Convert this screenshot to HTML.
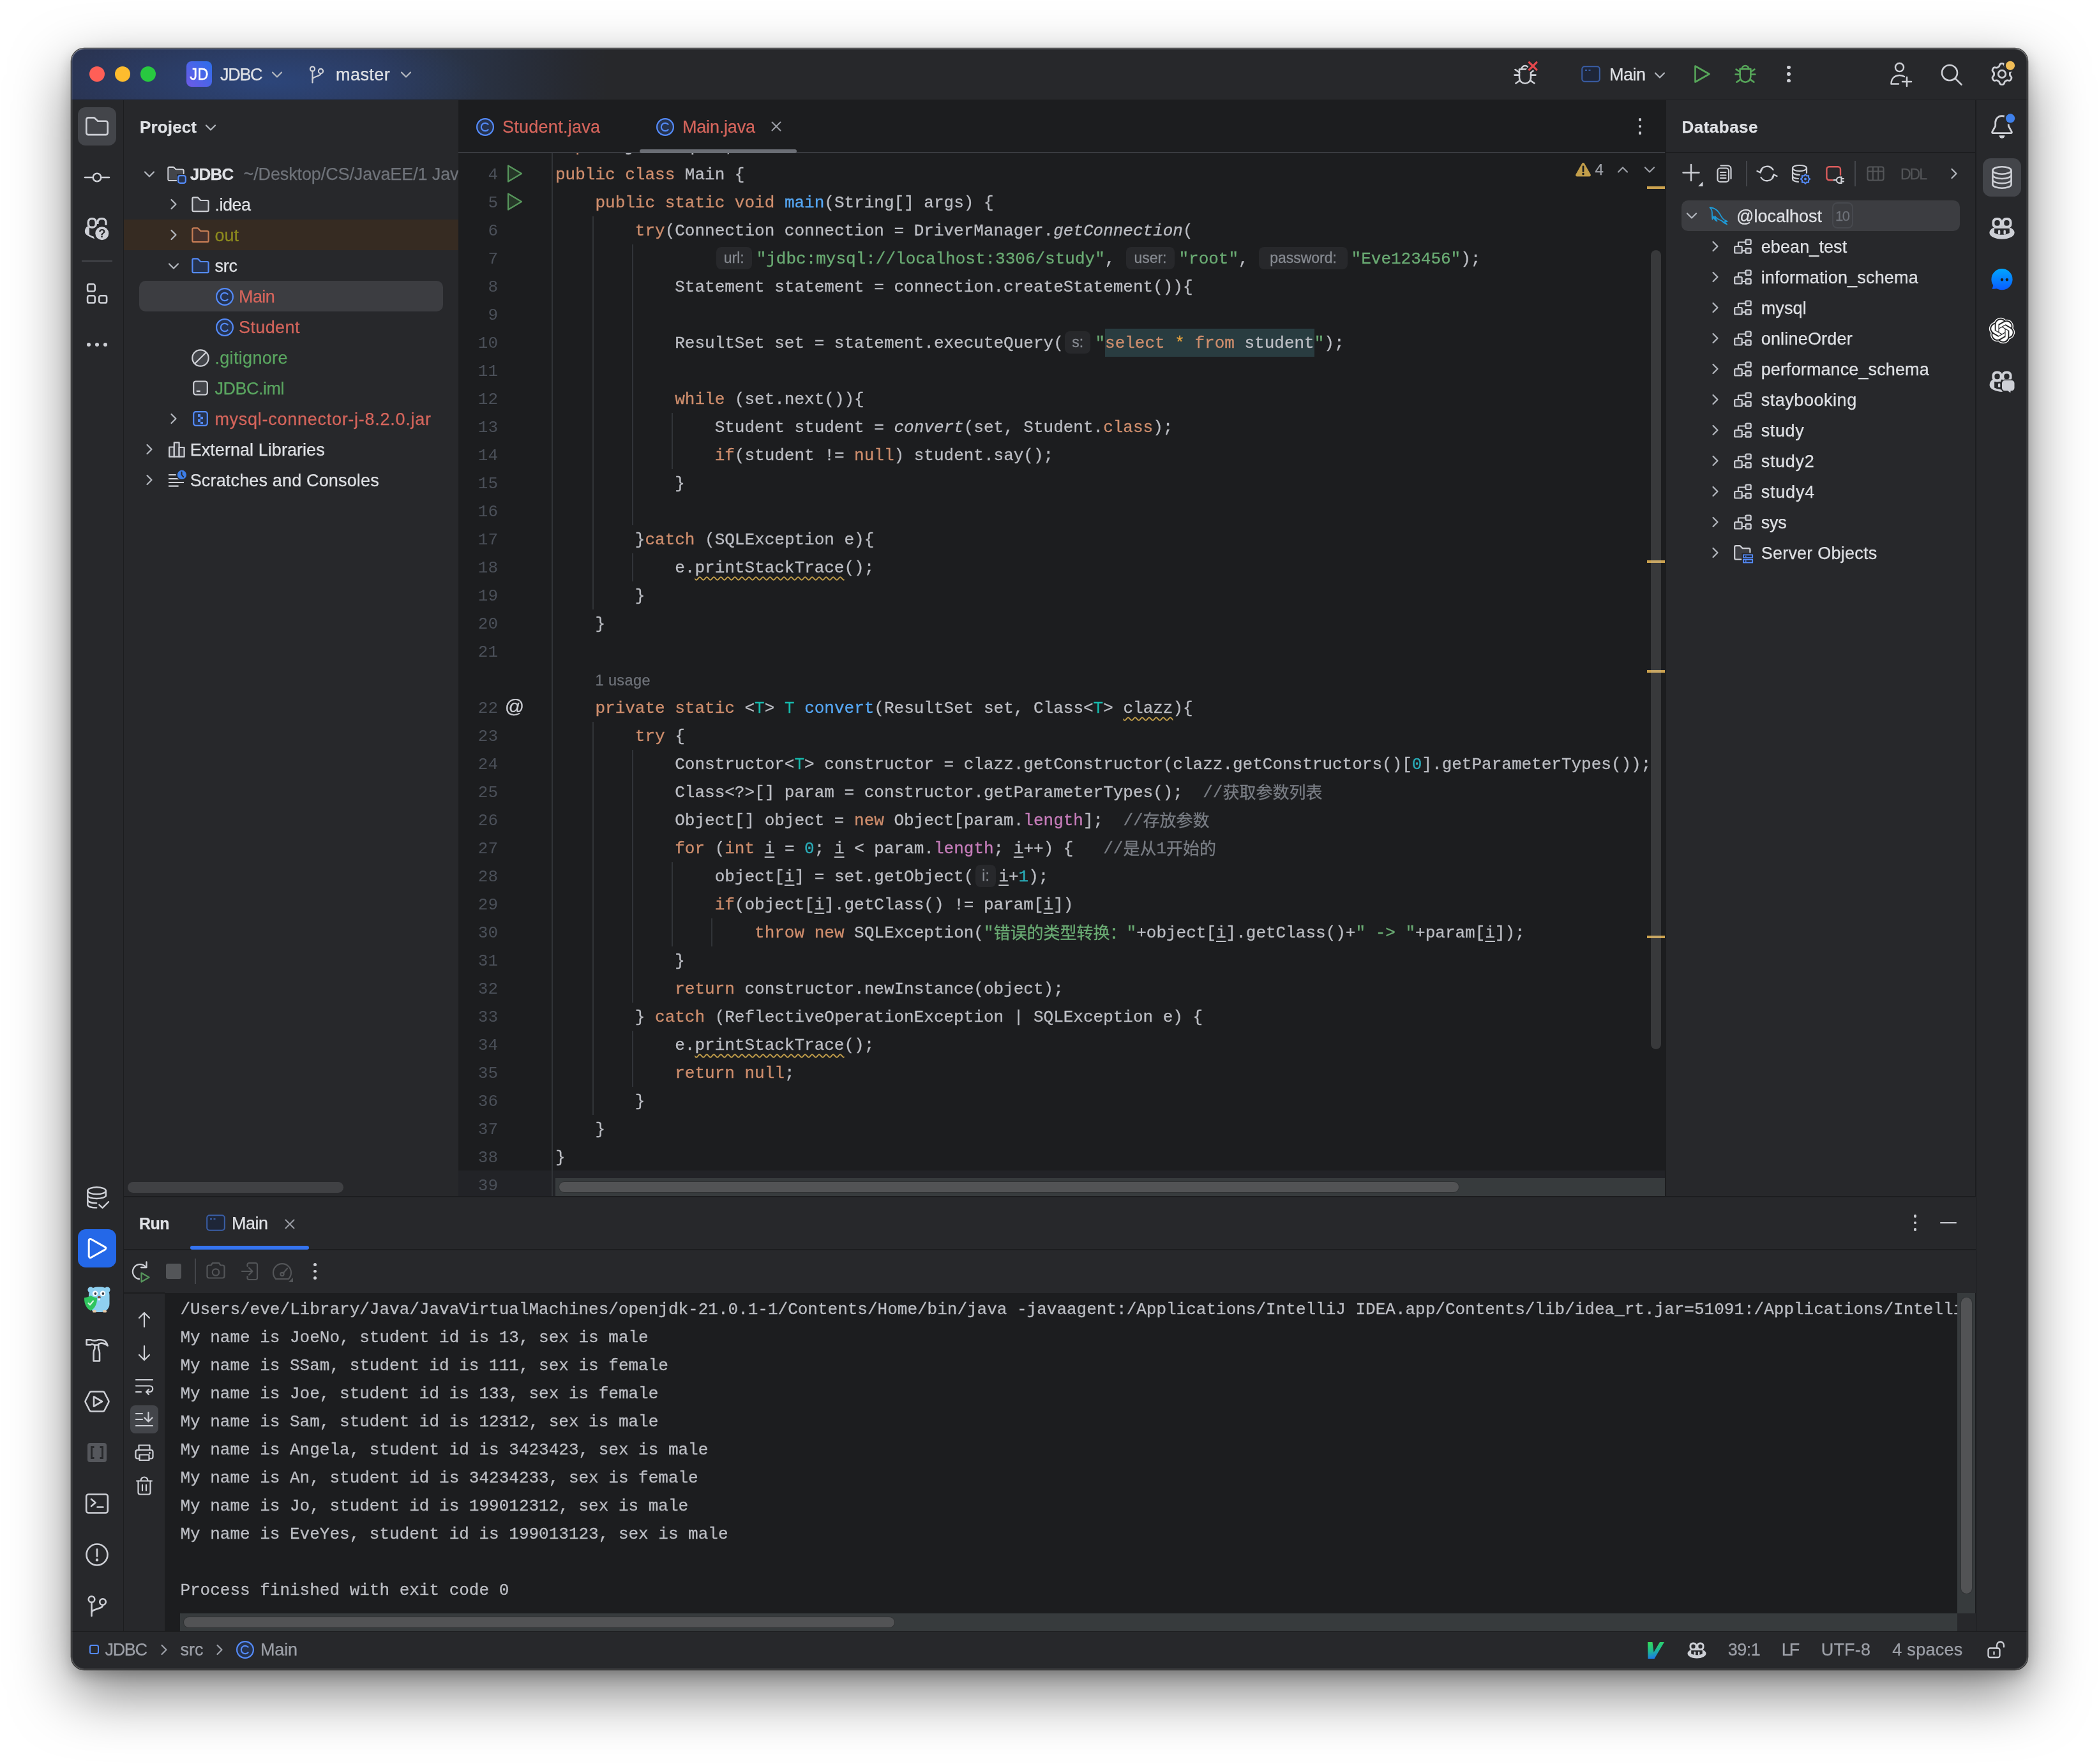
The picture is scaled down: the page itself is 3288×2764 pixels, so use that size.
<!DOCTYPE html>
<html lang="en"><head><meta charset="utf-8"><title>JDBC – Main.java</title>
<style>
html,body{margin:0;padding:0;}
body{width:3288px;height:2764px;background:#fff;position:relative;overflow:hidden;font-family:"Liberation Sans","Noto Sans CJK SC",sans-serif;}
.a{position:absolute;box-sizing:border-box;}
.t{white-space:pre;-webkit-text-stroke:.25px currentColor;}
.m{font-family:"Liberation Mono","Noto Sans CJK SC",monospace;}
#clip{left:0;top:0;width:3288px;height:2764px;clip-path:inset(76px 112px 148px 112px round 20px);will-change:transform;}
#win{left:112px;top:76px;width:3064px;height:2540px;border-radius:20px;background:#27282b;overflow:hidden;}
#shadow{left:112px;top:76px;width:3064px;height:2540px;border-radius:20px;box-shadow:0 0 0 1.3px rgba(0,0,0,.72),0 8px 22px rgba(0,0,0,.22),0 36px 92px rgba(0,0,0,.5);}
#ring{left:112px;top:76px;width:3064px;height:2540px;border-radius:20px;box-shadow:inset 0 0 0 1.5px rgba(255,255,255,.17);pointer-events:none;}
.code{left:870px;-webkit-text-stroke:.3px currentColor;margin-top:1px;font-size:26px;line-height:44px;height:44px;color:#bcbec4;white-space:pre;font-family:"Liberation Mono","Noto Sans CJK SC",monospace;}
.k{color:#cf8e6d}.f{color:#56a8f5}.s{color:#6aab73}.n{color:#2aacb8}.tp{color:#16baac}.fd{color:#c77dbb}.c{color:#7a7e85}.i{font-style:italic}
.u{text-decoration:underline;text-decoration-thickness:1.6px;text-underline-offset:4.5px}
.cj{position:relative;top:2px}
.w{text-decoration:underline wavy #c29e4a;text-decoration-thickness:1.5px;text-underline-offset:6px;text-decoration-skip-ink:none}
.h{display:inline-block;position:relative;height:44px;vertical-align:top}
.h b{position:absolute;top:2.5px;height:35px;border-radius:8px;background:#27282b;color:#868a91;font-weight:normal;font-family:"Liberation Sans",sans-serif;font-size:23px;line-height:35px;text-align:center;}
.ln{margin-top:1px;font-size:26px;line-height:44px;height:44px;color:#4b5059;text-align:right;width:80px;left:700px;font-family:"Liberation Mono",monospace;}
.con{-webkit-text-stroke:.3px currentColor;left:282px;font-size:26px;line-height:44px;height:44px;color:#bcbec4;white-space:pre;font-family:"Liberation Mono",monospace;}

</style></head>
<body>
<div class="a" id="shadow"></div>
<div class="a" id="clip">
<div class="a" id="win"></div>
<div class="a" style="left:112px;top:76px;width:3064px;height:80px;background:radial-gradient(ellipse 340px 85px at 310px 52px,rgba(48,92,178,.40),rgba(48,92,178,.18) 55%,rgba(48,92,178,0) 100%),linear-gradient(90deg,#2a3452 0px,#2a3654 330px,#2b3653 480px,#2a3448 588px,#282e3b 700px,#272a32 770px,#27282b 840px);border-radius:20px 20px 0 0;box-shadow:inset 0 1px 0 rgba(255,255,255,.18);"></div>
<div class="a" style="left:112px;top:156px;width:3064px;height:1px;background:#1c1d1f;"></div>
<div class="a" style="left:140px;top:104px;width:24px;height:24px;background:#ff5f57;border-radius:12px;"></div>
<div class="a" style="left:180px;top:104px;width:24px;height:24px;background:#febc2e;border-radius:12px;"></div>
<div class="a" style="left:220px;top:104px;width:24px;height:24px;background:#28c840;border-radius:12px;"></div>
<div class="a" style="left:292px;top:96px;width:40px;height:40px;background:linear-gradient(45deg,#6e5ae6 0%,#4f63e8 45%,#2b6fea 100%);border-radius:8px;"></div>
<div class="a t" style="left:292px;top:96px;width:40px;line-height:40px;text-align:center;font-size:26px;color:#fff;transform:scaleX(.9);-webkit-text-stroke:.5px #fff;letter-spacing:.5px;">JD</div>
<div class="a t " style="left:345px;top:97px;line-height:40px;font-size:27px;color:#dfe1e5;letter-spacing:-1.303px;">JDBC</div>
<svg class="a" style="left:424px;top:111px;" width="20" height="12" viewBox="-10 -6 20 12" fill="none"><path d="M-7 -3.5L0 3.5L7 -3.5" stroke="#b4b8bf" stroke-width="2.2" stroke-linecap="round" stroke-linejoin="round"/></svg>
<svg class="a" style="left:482px;top:99px;" width="28" height="36" viewBox="-14 -18 28 36" fill="none"><g stroke="#ced0d6" stroke-width="2.2" stroke-linecap="round"><circle cx="-6.5" cy="-9" r="3.6"/><circle cx="6.5" cy="-5.5" r="3.6"/><path d="M-6.5 -5.4V12.5"/><path d="M6.5 -1.9C6.5 3.5 -6.5 2 -6.5 7.5"/></g></svg>
<div class="a t " style="left:526px;top:97px;line-height:40px;font-size:27px;color:#dfe1e5;letter-spacing:0.437px;">master</div>
<svg class="a" style="left:626px;top:111px;" width="20" height="12" viewBox="-10 -6 20 12" fill="none"><path d="M-7 -3.5L0 3.5L7 -3.5" stroke="#b4b8bf" stroke-width="2.2" stroke-linecap="round" stroke-linejoin="round"/></svg>
<svg class="a" style="left:2362.5px;top:91px;" width="52" height="52" viewBox="-26 -26 52 52" fill="none"><g stroke="#ced0d6" stroke-width="2.6" stroke-linecap="round" stroke-linejoin="round" fill="none"><path d="M-9 -8.5H9V4.7a9 9 0 0 1 -18 0Z"/><path d="M-5.5 -8.5a5.5 5.5 0 0 1 11 0"/><path d="M-9 0.6H-16.5M9 0.6H16.5M-9 -3.5L-15.5 -8M9 -3.5L15.5 -8M-8 9L-14.5 13.5M8 9L14.5 13.5"/></g><path d="M6 -19.7L18.4 -7.3M18.4 -19.7L6 -7.3" stroke="#27282b" stroke-width="8" stroke-linecap="round"/><path d="M6.5 -19.2L17.9 -7.8M17.9 -19.2L6.5 -7.8" stroke="#e5484d" stroke-width="3.2" stroke-linecap="round"/></svg>
<svg class="a" style="left:2477px;top:103px;" width="30" height="26" viewBox="-15 -13 30 26" fill="none"><rect x="-13.8" y="-11.8" width="27.6" height="23.6" rx="4" fill="#1e2638" stroke="#3a5ea6" stroke-width="2"/><path d="M-9 -6H-6M-3.5 -6H-0.5" stroke="#3a5ea6" stroke-width="1.8"/></svg>
<div class="a t " style="left:2521px;top:97px;line-height:40px;font-size:27px;color:#dfe1e5;letter-spacing:-0.508px;">Main</div>
<svg class="a" style="left:2590px;top:112px;" width="20" height="12" viewBox="-10 -6 20 12" fill="none"><path d="M-7 -3.5L0 3.5L7 -3.5" stroke="#b4b8bf" stroke-width="2.2" stroke-linecap="round" stroke-linejoin="round"/></svg>
<svg class="a" style="left:2651px;top:100px;" width="30" height="32" viewBox="-15 -16 30 32" fill="none"><path d="M-10.5 -12.5L11.5 0L-10.5 12.5Z" stroke="#57a65a" stroke-width="2.6" stroke-linejoin="round"/></svg>
<svg class="a" style="left:2714px;top:96px;" width="40" height="40" viewBox="-20 -20 40 40" fill="none"><g transform="scale(.93)" stroke="#57a65a" stroke-width="2.8" stroke-linecap="round" stroke-linejoin="round" fill="none"><path d="M-9 -8.5H9V4.7a9 9 0 0 1 -18 0Z"/><path d="M-5.5 -8.5a5.5 5.5 0 0 1 11 0"/><path d="M-9 0.6H-16.5M9 0.6H16.5M-9 -3.5L-15.5 -8M9 -3.5L15.5 -8M-8 9L-14.5 13.5M8 9L14.5 13.5"/></g></svg>
<div class="a" style="left:2799.4px;top:102.9px;width:5.2px;height:5.2px;background:#ced0d6;border-radius:3px;"></div>
<div class="a" style="left:2799.4px;top:113.4px;width:5.2px;height:5.2px;background:#ced0d6;border-radius:3px;"></div>
<div class="a" style="left:2799.4px;top:123.9px;width:5.2px;height:5.2px;background:#ced0d6;border-radius:3px;"></div>
<svg class="a" style="left:2958px;top:97px;" width="40" height="40" viewBox="-20 -20 40 40" fill="none"><g stroke="#ced0d6" stroke-width="2.5" stroke-linecap="round" fill="none"><circle cx="-2.5" cy="-11.5" r="6.5"/><path d="M-15.5 14.5H-4M-15.5 14.5 C-15.5 5 -9 1 -2.5 1 C0.5 1 3 1.8 5 3"/><path d="M9 4V18M2 11H16"/></g></svg>
<svg class="a" style="left:3037.5px;top:98px;" width="38" height="38" viewBox="-19 -19 38 38" fill="none"><g stroke="#ced0d6" stroke-width="2.6" stroke-linecap="round" fill="none"><circle cx="-3" cy="-3" r="12"/><path d="M5.8 5.8L15.5 15.5"/></g></svg>
<svg class="a" style="left:3112px;top:92.2px;" width="48" height="48" viewBox="-24 -24 48 48" fill="none"><g stroke="#ced0d6" stroke-width="2.8" stroke-linejoin="round" fill="none"><path d="M12.40 0.00L12.40 0.65L12.44 1.31L12.59 1.99L13.04 2.77L13.91 3.73L14.71 4.78L14.99 5.75L14.89 6.63L14.59 7.44L14.20 8.20L13.74 8.92L13.18 9.58L12.48 10.11L11.49 10.35L10.18 10.18L8.92 9.91L8.02 9.90L7.35 10.12L6.76 10.42L6.20 10.74L5.64 11.07L5.09 11.42L4.57 11.90L4.12 12.68L3.73 13.91L3.22 15.13L2.51 15.86L1.70 16.21L0.86 16.36L0.00 16.40L-0.86 16.36L-1.70 16.21L-2.51 15.86L-3.22 15.13L-3.73 13.91L-4.12 12.68L-4.57 11.90L-5.09 11.42L-5.64 11.07L-6.20 10.74L-6.76 10.42L-7.35 10.12L-8.02 9.90L-8.92 9.91L-10.18 10.18L-11.49 10.35L-12.48 10.11L-13.18 9.58L-13.74 8.92L-14.20 8.20L-14.59 7.44L-14.89 6.63L-14.99 5.75L-14.71 4.78L-13.91 3.73L-13.04 2.77L-12.59 1.99L-12.44 1.31L-12.40 0.65L-12.40 0.00L-12.40 -0.65L-12.44 -1.31L-12.59 -1.99L-13.04 -2.77L-13.91 -3.73L-14.71 -4.78L-14.99 -5.75L-14.89 -6.63L-14.59 -7.44L-14.20 -8.20L-13.74 -8.92L-13.18 -9.58L-12.48 -10.11L-11.49 -10.35L-10.18 -10.18L-8.92 -9.91L-8.02 -9.90L-7.35 -10.12L-6.76 -10.42L-6.20 -10.74L-5.64 -11.07L-5.09 -11.42L-4.57 -11.90L-4.12 -12.68L-3.73 -13.91L-3.22 -15.13L-2.51 -15.86L-1.70 -16.21L-0.86 -16.36L-0.00 -16.40L0.86 -16.36L1.70 -16.21L2.51 -15.86L3.22 -15.13L3.73 -13.91L4.12 -12.68L4.57 -11.90L5.09 -11.42L5.64 -11.07L6.20 -10.74L6.76 -10.42L7.35 -10.12L8.02 -9.90L8.92 -9.91L10.18 -10.18L11.49 -10.35L12.48 -10.11L13.18 -9.58L13.74 -8.92L14.20 -8.20L14.59 -7.44L14.89 -6.63L14.99 -5.75L14.71 -4.78L13.91 -3.73L13.04 -2.77L12.59 -1.99L12.44 -1.31L12.40 -0.65Z"/><circle r="5.8"/></g><circle cx="13" cy="-13.2" r="10" fill="#27282b"/><circle cx="13" cy="-13.2" r="7.1" fill="#f0bd57"/></svg>
<div class="a" style="left:112px;top:157px;width:81px;height:2400px;background:#27282b;"></div>
<div class="a" style="left:193px;top:157px;width:1px;height:2400px;background:#1c1d1f;"></div>
<div class="a" style="left:122px;top:168px;width:60px;height:60px;background:#43454a;border-radius:12px;"></div>
<svg class="a" style="left:130px;top:178px;" width="44" height="40" viewBox="-22 -20 44 40" fill="none"><path d="M-16.7 -10.6 a3 3 0 0 1 3 -3 h8.2 a3 3 0 0 1 2.1 .9 l4.6 4.4 h12.5 a3 3 0 0 1 3 3 v15.4 a3 3 0 0 1 -3 3 h-27.4 a3 3 0 0 1 -3 -3 z" stroke="#ced0d6" stroke-width="2.6" stroke-linejoin="round"/></svg>
<svg class="a" style="left:130px;top:268px;" width="44" height="20" viewBox="-22 -10 44 20" fill="none"><g stroke="#ced0d6" stroke-width="2.6" stroke-linecap="round"><path d="M-19 0H-8M8 0H19"/><circle r="6.3"/></g></svg>
<svg class="a" style="left:130px;top:337px;" width="44" height="44" viewBox="-22 -22 44 44" fill="none"><g stroke="#ced0d6" stroke-width="3.4" fill="none"><rect x="-13.7" y="-16.4" width="12" height="13.6" rx="5.3"/><path d="M0.9 -8V-10.9a5.5 5.5 0 0 1 5.5 -5.5h2a5.5 5.5 0 0 1 5.5 5.5V-6.3"/></g><path d="M-15.4 -4.5C-18.5 -1.5 -19.3 1.5 -19.1 4C-19 7 -17.5 8.5 -15 10C-11.5 12.2 -7.5 14 -3.8 15.2L-5.5 11.5C-8 10.8 -10.2 9.8 -12 8.4V-2.5Z" fill="#ced0d6"/><circle cx="7.8" cy="6.7" r="12.3" fill="#27282b"/><circle cx="7.8" cy="6.7" r="10.5" fill="#ced0d6"/><text x="7.9" y="13.4" text-anchor="middle" font-family="Liberation Sans,sans-serif" font-weight="bold" font-size="18.5" fill="#27282b">?</text></svg>
<div class="a" style="left:128px;top:408px;width:48px;height:2px;background:#43454a;"></div>
<svg class="a" style="left:132px;top:441px;" width="40" height="40" viewBox="-20 -20 40 40" fill="none"><g stroke="#ced0d6" stroke-width="2.6"><rect x="-14.9" y="-15.7" width="11.6" height="11.2" rx="2.6"/><rect x="-14.9" y="2.3" width="11.6" height="11.2" rx="2.6"/><rect x="3.3" y="2.3" width="11.8" height="11.2" rx="2.6"/></g></svg>
<div class="a" style="left:135.8px;top:537px;width:6px;height:6px;background:#ced0d6;border-radius:3px;"></div>
<div class="a" style="left:149px;top:537px;width:6px;height:6px;background:#ced0d6;border-radius:3px;"></div>
<div class="a" style="left:162.2px;top:537px;width:6px;height:6px;background:#ced0d6;border-radius:3px;"></div>
<svg class="a" style="left:130px;top:1855px;" width="44" height="44" viewBox="-22 -22 44 44" fill="none"><g stroke="#ced0d6" stroke-width="2.4" stroke-linecap="round" stroke-linejoin="round" fill="none"><ellipse cx="-0.4" cy="-11.3" rx="14.3" ry="5.4"/><path d="M-14.7 -11.3V10.5C-14.7 13.5 -8.5 15.3 -0.8 15.4"/><path d="M13.9 -11.3V-3.5"/><path d="M-14.7 -4C-14.7 -1 -8 1 -0.4 1C7 1 13.9 -1 13.9 -4"/><path d="M-14.7 3.2C-14.7 6.2 -8.5 8 -0.8 8.1"/><path d="M3.4 10.8L8.5 15.6L18 6.2"/></g></svg>
<div class="a" style="left:122px;top:1926px;width:60px;height:60px;background:#2468e8;border-radius:12.5px;"></div>
<svg class="a" style="left:130px;top:1934px;" width="44" height="44" viewBox="-22 -22 44 44" fill="none"><path d="M-10.3 -12.1L11.1 0L-10.3 12.1Z" stroke="#ffffff" stroke-width="8" stroke-linejoin="round" fill="#fff"/><path d="M-10.3 -12.1L11.1 0L-10.3 12.1Z" stroke="#2468e8" stroke-width="2" stroke-linejoin="round" fill="#2468e8"/></svg>
<svg class="a" style="left:130px;top:2014px;" width="44" height="44" viewBox="-22 -22 44 44" fill="none"><circle cx="-10" cy="-15" r="4.6" fill="#8fd0f0"/><circle cx="16" cy="-15" r="4.6" fill="#8fd0f0"/><rect x="-13" y="-19.5" width="32.5" height="39.5" rx="13" fill="#8fd0f0"/><rect x="-7" y="17" width="6" height="3.5" rx="1.5" fill="#e6c9a8"/><rect x="9" y="17" width="6" height="3.5" rx="1.5" fill="#e6c9a8"/><circle cx="-3" cy="-9.2" r="4.2" fill="#fff"/><circle cx="9" cy="-9.2" r="4.2" fill="#fff"/><circle cx="-2.6" cy="-9" r="1.9" fill="#3a3f4a"/><circle cx="9.4" cy="-9" r="1.9" fill="#3a3f4a"/><ellipse cx="3.3" cy="-3.3" rx="2.6" ry="1.9" fill="#7a4a3a"/><rect x="1.6" y="-1.6" width="3.4" height="3" rx="1" fill="#fff"/><path d="M-20 -2.5 C-16 -3 -13 -4.2 -10 -6 C-7 -4.2 -4 -3 0 -2.5 C0.3 8 -4 14.5 -10 17.8 C-16 14.5 -20.3 8 -20 -2.5Z" fill="#2fc55e"/><path d="M-13.5 6 L-11 8.5 L-6 2.5" stroke="#d8f5e0" stroke-width="2.2" fill="none" stroke-linecap="round" stroke-linejoin="round"/></svg>
<svg class="a" style="left:130px;top:2094px;" width="44" height="44" viewBox="-22 -22 44 44" fill="none"><g stroke="#ced0d6" stroke-width="2.6" stroke-linejoin="round" stroke-linecap="round" fill="none"><path d="M-16.4 -16.7 L-9.5 -16.7 C-6 -15 -2 -15 1.5 -16.7 L6 -16.7 C11.5 -16.7 15 -13 16.6 -7.5 C13 -10.5 9 -11.6 5.5 -11.3 C3.5 -11 2 -9.8 1 -8.5 L-4.5 -8.5 C-6.5 -10 -8.5 -10 -10 -8.8 L-16.4 -8.8 Z"/><path d="M-3.6 -8 L-3.6 -2.5 C-5.4 0 -5.4 2 -5.4 4 L-5.4 16.5 L4 16.5 L4 4 C4 2 4 0 2.2 -2.5 L2.2 -8"/></g></svg>
<svg class="a" style="left:130px;top:2176px;" width="44" height="40" viewBox="-22 -20 44 40" fill="none"><g stroke="#ced0d6" stroke-width="2.6" stroke-linejoin="round" fill="none"><path d="M-9 -15.5 H9 a3 3 0 0 1 2.6 1.5 L18 -1.5 a3 3 0 0 1 0 3 L11.6 14 a3 3 0 0 1 -2.6 1.5 H-9 a3 3 0 0 1 -2.6 -1.5 L-18 1.5 a3 3 0 0 1 0 -3 L-11.6 -14 a3 3 0 0 1 2.6 -1.5 Z"/><path d="M-5 -7.5 L8 0 L-5 7.5 Z"/></g></svg>
<svg class="a" style="left:135px;top:2259px;" width="34" height="34" viewBox="-17 -17 34 34" fill="none"><rect x="-15" y="-15" width="30" height="30" rx="4" fill="#55575c"/><path d="M-4.5 -8.5H-8.5V8.5H-4.5M4.5 -8.5H8.5V8.5H4.5" stroke="#27282b" stroke-width="3" fill="none"/></svg>
<svg class="a" style="left:132px;top:2338px;" width="40" height="36" viewBox="-20 -18 40 36" fill="none"><g stroke="#ced0d6" stroke-width="2.6" stroke-linecap="round" stroke-linejoin="round" fill="none"><rect x="-16.8" y="-14.5" width="33.6" height="29" rx="3.5"/><path d="M-9 -7 L-2.5 -1.5 L-9 4M0.5 5.5 H9.5"/></g></svg>
<svg class="a" style="left:132px;top:2416px;" width="40" height="40" viewBox="-20 -20 40 40" fill="none"><g stroke="#ced0d6" stroke-width="2.6" stroke-linecap="round" fill="none"><circle r="16.5"/><path d="M0 -8.5V2.5"/></g><circle cy="8.3" r="2.2" fill="#ced0d6"/></svg>
<svg class="a" style="left:134px;top:2496px;" width="36" height="40" viewBox="-18 -20 36 40" fill="none"><g stroke="#ced0d6" stroke-width="2.6" stroke-linecap="round" fill="none"><circle cx="-8.5" cy="-10" r="4.8"/><circle cx="9" cy="-6" r="4.8"/><path d="M-8.5 -5V16"/><path d="M9 -1 C9 6 -8.5 4 -8.5 11"/></g></svg>
<div class="a" style="left:194px;top:157px;width:524px;height:1717px;background:#27282b;"></div>
<div class="a t " style="left:219px;top:174.5px;line-height:48px;font-size:26px;color:#dfe1e5;letter-spacing:0.142px;font-weight:bold;">Project</div>
<svg class="a" style="left:320px;top:194px;" width="20" height="12" viewBox="-10 -6 20 12" fill="none"><path d="M-7 -3.5L0 3.5L7 -3.5" stroke="#b4b8bf" stroke-width="2.2" stroke-linecap="round" stroke-linejoin="round"/></svg>
<div class="a" style="left:194px;top:344px;width:524px;height:48px;background:#362b22;"></div>
<div class="a" style="left:218px;top:440px;width:476px;height:48px;background:#3c3d41;border-radius:10px;"></div>
<svg class="a" style="left:223.5px;top:267px;" width="20" height="12" viewBox="-10 -6 20 12" fill="none"><path d="M-7 -3.5L0 3.5L7 -3.5" stroke="#b4b8bf" stroke-width="2.2" stroke-linecap="round" stroke-linejoin="round"/></svg>
<svg class="a" style="left:259px;top:257px;" width="36" height="32" viewBox="-18 -16 36 32" fill="none"><path d="M-13.6 -9.2 a2 2 0 0 1 2 -2 h5.6 a2 2 0 0 1 1.5 .6 l3.3 3.3 h9.8 a2 2 0 0 1 2 2 v4.3 M-1 9.8 h-10.6 a2 2 0 0 1 -2 -2 v-17" fill="none" stroke="#ced0d6" stroke-width="2.2" stroke-linejoin="round" stroke-linecap="round"/><path d="M-12.5 -9 h7 l4 4 h11 v5 h-9.5 v9 h-12.5z" fill="#43454a"/><rect x="2.2" y="2.2" width="11.6" height="11.6" rx="3" fill="#25324d" stroke="#548af7" stroke-width="2.2"/></svg>
<div class="a t " style="left:297.7px;top:249px;line-height:48px;font-size:26px;color:#dfe1e5;letter-spacing:-0.731px;font-weight:bold;">JDBC</div>
<div class="a t " style="left:381.5px;top:249px;line-height:48px;font-size:27px;color:#6f737a;letter-spacing:-0.117px;width:336.5px;overflow:hidden;">~/Desktop/CS/JavaEE/1 Java</div>
<svg class="a" style="left:265.5px;top:310px;" width="12" height="20" viewBox="-6 -10 12 20" fill="none"><path d="M-3.5 -7L3.5 0L-3.5 7" stroke="#b4b8bf" stroke-width="2.2" stroke-linecap="round" stroke-linejoin="round"/></svg>
<svg class="a" style="left:298px;top:306.5px;" width="32" height="28" viewBox="-16 -14 32 28" fill="none"><path d="M-12.6 -9.6 a2 2 0 0 1 2 -2 h5.6 a2 2 0 0 1 1.5 .6 l3.8 4 h10.3 a2 2 0 0 1 2 2 v13.2 a2 2 0 0 1 -2 2 h-21.2 a2 2 0 0 1 -2 -2 z" fill="#3c3d42" stroke="#ced0d6" stroke-width="2.2" stroke-linejoin="round"/></svg>
<div class="a t " style="left:336.4px;top:297px;line-height:48px;font-size:27px;color:#dfe1e5;letter-spacing:-0.487px;">.idea</div>
<svg class="a" style="left:265.5px;top:358px;" width="12" height="20" viewBox="-6 -10 12 20" fill="none"><path d="M-3.5 -7L3.5 0L-3.5 7" stroke="#b4b8bf" stroke-width="2.2" stroke-linecap="round" stroke-linejoin="round"/></svg>
<svg class="a" style="left:298px;top:354.5px;" width="32" height="28" viewBox="-16 -14 32 28" fill="none"><path d="M-12.6 -9.6 a2 2 0 0 1 2 -2 h5.6 a2 2 0 0 1 1.5 .6 l3.8 4 h10.3 a2 2 0 0 1 2 2 v13.2 a2 2 0 0 1 -2 2 h-21.2 a2 2 0 0 1 -2 -2 z" fill="#45302b" stroke="#c77d55" stroke-width="2.2" stroke-linejoin="round"/></svg>
<div class="a t " style="left:336.4px;top:345px;line-height:48px;font-size:27px;color:#8c8a1e;letter-spacing:0.034px;">out</div>
<svg class="a" style="left:261.5px;top:411px;" width="20" height="12" viewBox="-10 -6 20 12" fill="none"><path d="M-7 -3.5L0 3.5L7 -3.5" stroke="#b4b8bf" stroke-width="2.2" stroke-linecap="round" stroke-linejoin="round"/></svg>
<svg class="a" style="left:298px;top:402.5px;" width="32" height="28" viewBox="-16 -14 32 28" fill="none"><path d="M-12.6 -9.6 a2 2 0 0 1 2 -2 h5.6 a2 2 0 0 1 1.5 .6 l3.8 4 h10.3 a2 2 0 0 1 2 2 v13.2 a2 2 0 0 1 -2 2 h-21.2 a2 2 0 0 1 -2 -2 z" fill="#25324d" stroke="#548af7" stroke-width="2.2" stroke-linejoin="round"/></svg>
<div class="a t " style="left:336.4px;top:393px;line-height:48px;font-size:27px;color:#dfe1e5;letter-spacing:-0.196px;">src</div>
<svg class="a" style="left:337.2px;top:450px;" width="30" height="30" viewBox="-15 -15 30 30" fill="none"><circle r="12.9" fill="#25324d" stroke="#548af7" stroke-width="2.2"/><path d="M4.6 -4.2 A6.2 6.2 0 1 0 4.6 4.2" stroke="#548af7" stroke-width="2.2" stroke-linecap="round" fill="none"/></svg>
<div class="a t " style="left:374px;top:441px;line-height:48px;font-size:27px;color:#d5655c;letter-spacing:-0.574px;">Main</div>
<svg class="a" style="left:337.2px;top:498px;" width="30" height="30" viewBox="-15 -15 30 30" fill="none"><circle r="12.9" fill="#25324d" stroke="#548af7" stroke-width="2.2"/><path d="M4.6 -4.2 A6.2 6.2 0 1 0 4.6 4.2" stroke="#548af7" stroke-width="2.2" stroke-linecap="round" fill="none"/></svg>
<div class="a t " style="left:374px;top:489px;line-height:48px;font-size:27px;color:#d5655c;letter-spacing:0.388px;">Student</div>
<svg class="a" style="left:298px;top:545px;" width="32" height="32" viewBox="-16 -16 32 32" fill="none"><g stroke="#ced0d6" stroke-width="2.2" stroke-linecap="round"><circle r="12.7" fill="#43454a"/><path d="M-8.8 8.8L8.8 -8.8"/></g></svg>
<div class="a t " style="left:336.4px;top:537px;line-height:48px;font-size:27px;color:#5aa560;letter-spacing:0.326px;">.gitignore</div>
<svg class="a" style="left:299px;top:593px;" width="30" height="30" viewBox="-15 -15 30 30" fill="none"><g stroke="#ced0d6" stroke-width="2.2" stroke-linecap="round"><rect x="-10.8" y="-10.5" width="21.6" height="21" rx="3.5" fill="#43454a"/><path d="M-5.5 4.8H-1"/></g></svg>
<div class="a t " style="left:336.4px;top:585px;line-height:48px;font-size:27px;color:#5aa560;letter-spacing:-0.500px;">JDBC.iml</div>
<svg class="a" style="left:265.5px;top:646px;" width="12" height="20" viewBox="-6 -10 12 20" fill="none"><path d="M-3.5 -7L3.5 0L-3.5 7" stroke="#b4b8bf" stroke-width="2.2" stroke-linecap="round" stroke-linejoin="round"/></svg>
<svg class="a" style="left:299px;top:641px;" width="30" height="30" viewBox="-15 -15 30 30" fill="none"><rect x="-10.8" y="-10.8" width="21.6" height="21.6" rx="3.5" fill="#25324d" stroke="#548af7" stroke-width="2.2"/><g fill="#548af7"><rect x="-4" y="-7" width="4" height="4"/><rect x="0" y="-3" width="4" height="4"/><rect x="-4" y="1" width="4" height="4"/><rect x="0" y="5" width="4" height="3"/></g></svg>
<div class="a t " style="left:336.4px;top:633px;line-height:48px;font-size:27px;color:#d5655c;letter-spacing:0.727px;">mysql-connector-j-8.2.0.jar</div>
<svg class="a" style="left:227.5px;top:694px;" width="12" height="20" viewBox="-6 -10 12 20" fill="none"><path d="M-3.5 -7L3.5 0L-3.5 7" stroke="#b4b8bf" stroke-width="2.2" stroke-linecap="round" stroke-linejoin="round"/></svg>
<svg class="a" style="left:261px;top:690px;" width="32" height="30" viewBox="-16 -15 32 30" fill="none"><g stroke="#ced0d6" stroke-width="2.2" stroke-linejoin="round" fill="none"><rect x="-11.8" y="-4.5" width="7.6" height="15.2" fill="#3c3d42"/><rect x="-4.2" y="-11.6" width="7.8" height="22.3" fill="#3c3d42"/><rect x="3.6" y="-4" width="8" height="14.7" fill="#3c3d42"/></g></svg>
<div class="a t " style="left:297.7px;top:681px;line-height:48px;font-size:27px;color:#dfe1e5;letter-spacing:0.053px;">External Libraries</div>
<svg class="a" style="left:227.5px;top:742px;" width="12" height="20" viewBox="-6 -10 12 20" fill="none"><path d="M-3.5 -7L3.5 0L-3.5 7" stroke="#b4b8bf" stroke-width="2.2" stroke-linecap="round" stroke-linejoin="round"/></svg>
<svg class="a" style="left:260px;top:736px;" width="34" height="34" viewBox="-17 -17 34 34" fill="none"><g stroke="#ced0d6" stroke-width="2.2"><path d="M-13 -9H-1.3M-13 -2.8H4M-13 3H11M-13 8.7H2.6"/></g><circle cx="7.9" cy="-9.1" r="8.8" fill="#27282b"/><circle cx="7.9" cy="-9.1" r="7.1" fill="#3d7ee8"/><path d="M7.6 -13.2V-9L10.2 -5.8" stroke="#27282b" stroke-width="1.9" fill="none" stroke-linecap="round"/></svg>
<div class="a t " style="left:297.7px;top:729px;line-height:48px;font-size:27px;color:#dfe1e5;letter-spacing:0.159px;">Scratches and Consoles</div>
<div class="a" style="left:200px;top:1852px;width:338px;height:16.5px;background:#404144;border-radius:8.25px;"></div>
<div class="a" style="left:718px;top:157px;width:1890px;height:1717px;background:#1c1d1f;"></div>
<div class="a" style="left:2608px;top:157px;width:2px;height:1717px;background:#1c1d1f;"></div>
<div class="a" style="left:718px;top:1834px;width:1890px;height:45px;background:#222327;"></div>
<div class="a code" style="top:207px"><span class="k">import</span> java.sql.*;</div>
<div class="a ln" style="top:251px">4</div>
<div class="a code" style="top:251px"><span class="k">public class</span> Main {</div>
<div class="a ln" style="top:295px">5</div>
<div class="a code" style="top:295px">    <span class="k">public static void</span> <span class="f">main</span>(String[] args) {</div>
<div class="a ln" style="top:339px">6</div>
<div class="a code" style="top:339px">        <span class="k">try</span>(Connection connection = DriverManager.<span class="i">getConnection</span>(</div>
<div class="a ln" style="top:383px">7</div>
<div class="a code" style="top:383px">                <span class="h" style="width:65px"><b style="left:2.4px;width:55.5px">url:</b></span><span class="s">"jdbc:mysql://localhost:3306/study"</span>, <span class="h" style="width:84.5px"><b style="left:2px;width:76px">user:</b></span><span class="s">"root"</span>, <span class="h" style="width:145.3px"><b style="left:1px;width:138.5px">password:</b></span><span class="s">"Eve123456"</span>);</div>
<div class="a ln" style="top:427px">8</div>
<div class="a code" style="top:427px">            Statement statement = connection.createStatement()){</div>
<div class="a ln" style="top:471px">9</div>
<div class="a ln" style="top:515px">10</div>
<div class="a code" style="top:515px">            ResultSet set = statement.executeQuery(<span class="h" style="width:49.7px"><b style="left:2.4px;width:40px">s:</b></span><span class="s">"</span><span style="background:#293c40;padding:8.3px 0 6.3px;"><span class="k">select </span><span style="color:#e8a33e">*</span><span class="k"> from </span>student</span><span class="s">"</span>);</div>
<div class="a ln" style="top:559px">11</div>
<div class="a ln" style="top:603px">12</div>
<div class="a code" style="top:603px">            <span class="k">while</span> (set.next()){</div>
<div class="a ln" style="top:647px">13</div>
<div class="a code" style="top:647px">                Student student = <span class="i">convert</span>(set, Student.<span class="k">class</span>);</div>
<div class="a ln" style="top:691px">14</div>
<div class="a code" style="top:691px">                <span class="k">if</span>(student != <span class="k">null</span>) student.say();</div>
<div class="a ln" style="top:735px">15</div>
<div class="a code" style="top:735px">            }</div>
<div class="a ln" style="top:779px">16</div>
<div class="a ln" style="top:823px">17</div>
<div class="a code" style="top:823px">        }<span class="k">catch</span> (SQLException e){</div>
<div class="a ln" style="top:867px">18</div>
<div class="a code" style="top:867px">            e.<span class="w">printStackTrace</span>();</div>
<div class="a ln" style="top:911px">19</div>
<div class="a code" style="top:911px">        }</div>
<div class="a ln" style="top:955px">20</div>
<div class="a code" style="top:955px">    }</div>
<div class="a ln" style="top:999px">21</div>
<div class="a ln" style="top:1087px">22</div>
<div class="a code" style="top:1087px">    <span class="k">private static</span> &lt;<span class="tp">T</span>&gt; <span class="tp">T</span> <span class="f">convert</span>(ResultSet set, Class&lt;<span class="tp">T</span>&gt; <span class="w">clazz</span>){</div>
<div class="a ln" style="top:1131px">23</div>
<div class="a code" style="top:1131px">        <span class="k">try</span> {</div>
<div class="a ln" style="top:1175px">24</div>
<div class="a code" style="top:1175px">            Constructor&lt;<span class="tp">T</span>&gt; constructor = clazz.getConstructor(clazz.getConstructors()[<span class="n">0</span>].getParameterTypes());</div>
<div class="a ln" style="top:1219px">25</div>
<div class="a code" style="top:1219px">            Class&lt;?&gt;[] param = constructor.getParameterTypes();  <span class="c">//</span><span class="c cj">获取参数列表</span></div>
<div class="a ln" style="top:1263px">26</div>
<div class="a code" style="top:1263px">            Object[] object = <span class="k">new</span> Object[param.<span class="fd">length</span>];  <span class="c">//</span><span class="c cj">存放参数</span></div>
<div class="a ln" style="top:1307px">27</div>
<div class="a code" style="top:1307px">            <span class="k">for</span> (<span class="k">int</span> <span class="u">i</span> = <span class="n">0</span>; <span class="u">i</span> &lt; param.<span class="fd">length</span>; <span class="u">i</span>++) {   <span class="c">//</span><span class="c cj">是从</span><span class="c">1</span><span class="c cj">开始的</span></div>
<div class="a ln" style="top:1351px">28</div>
<div class="a code" style="top:1351px">                object[<span class="u">i</span>] = set.getObject(<span class="h" style="width:39px"><b style="left:2.7px;width:32px">i:</b></span><span class="u">i</span>+<span class="n">1</span>);</div>
<div class="a ln" style="top:1395px">29</div>
<div class="a code" style="top:1395px">                <span class="k">if</span>(object[<span class="u">i</span>].getClass() != param[<span class="u">i</span>])</div>
<div class="a ln" style="top:1439px">30</div>
<div class="a code" style="top:1439px">                    <span class="k">throw new</span> SQLException(<span class="s">"</span><span class="s cj">错误的类型转换：</span><span class="s">"</span>+object[<span class="u">i</span>].getClass()+<span class="s">" -&gt; "</span>+param[<span class="u">i</span>]);</div>
<div class="a ln" style="top:1483px">31</div>
<div class="a code" style="top:1483px">            }</div>
<div class="a ln" style="top:1527px">32</div>
<div class="a code" style="top:1527px">            <span class="k">return</span> constructor.newInstance(object);</div>
<div class="a ln" style="top:1571px">33</div>
<div class="a code" style="top:1571px">        } <span class="k">catch</span> (ReflectiveOperationException | SQLException e) {</div>
<div class="a ln" style="top:1615px">34</div>
<div class="a code" style="top:1615px">            e.<span class="w">printStackTrace</span>();</div>
<div class="a ln" style="top:1659px">35</div>
<div class="a code" style="top:1659px">            <span class="k">return null</span>;</div>
<div class="a ln" style="top:1703px">36</div>
<div class="a code" style="top:1703px">        }</div>
<div class="a ln" style="top:1747px">37</div>
<div class="a code" style="top:1747px">    }</div>
<div class="a ln" style="top:1791px">38</div>
<div class="a code" style="top:1791px">}</div>
<div class="a ln" style="top:1835px">39</div>
<div class="a t " style="left:932.5px;top:1043.5px;line-height:44px;font-size:23.5px;color:#6f737a;letter-spacing:0.395px;">1 usage</div>
<div class="a" style="left:928px;top:339px;width:2px;height:616px;background:#313438;"></div>
<div class="a" style="left:990px;top:383px;width:2px;height:440px;background:#313438;"></div>
<div class="a" style="left:990px;top:867px;width:2px;height:44px;background:#313438;"></div>
<div class="a" style="left:1052px;top:647px;width:2px;height:88px;background:#313438;"></div>
<div class="a" style="left:928px;top:1131px;width:2px;height:616px;background:#313438;"></div>
<div class="a" style="left:990px;top:1175px;width:2px;height:396px;background:#313438;"></div>
<div class="a" style="left:990px;top:1615px;width:2px;height:88px;background:#313438;"></div>
<div class="a" style="left:1052px;top:1351px;width:2px;height:132px;background:#313438;"></div>
<div class="a" style="left:1114px;top:1439px;width:2px;height:44px;background:#313438;"></div>
<div class="a" style="left:864px;top:240px;width:2px;height:1634px;background:#313438;"></div>
<svg class="a" style="left:791px;top:256px;" width="30" height="32" viewBox="-15 -16 30 32" fill="none"><path d="M-10 -12.5 L11 0 L-10 12.5 Z" fill="#253627" stroke="#57965c" stroke-width="2.2" stroke-linejoin="round"/></svg>
<svg class="a" style="left:791px;top:300px;" width="30" height="32" viewBox="-15 -16 30 32" fill="none"><path d="M-10 -12.5 L11 0 L-10 12.5 Z" fill="#253627" stroke="#57965c" stroke-width="2.2" stroke-linejoin="round"/></svg>
<div class="a t" style="left:790px;top:1085px;width:32px;text-align:center;font-size:30px;line-height:44px;color:#ced0d6;">@</div>
<div class="a" style="left:718px;top:157px;width:1890px;height:81px;background:#1c1d1f;"></div>
<div class="a" style="left:718px;top:238px;width:1890px;height:2px;background:#393b40;"></div>
<div class="a" style="left:1002px;top:234px;width:246px;height:6px;background:#6b6e75;border-radius:3px;"></div>
<svg class="a" style="left:745px;top:183.5px;" width="30" height="30" viewBox="-15 -15 30 30" fill="none"><circle r="12.9" fill="#25324d" stroke="#548af7" stroke-width="2.2"/><path d="M4.6 -4.2 A6.2 6.2 0 1 0 4.6 4.2" stroke="#548af7" stroke-width="2.2" stroke-linecap="round" fill="none"/></svg>
<div class="a t " style="left:787px;top:174.5px;line-height:48px;font-size:27px;color:#d5655c;letter-spacing:0.263px;">Student.java</div>
<svg class="a" style="left:1027px;top:183.5px;" width="30" height="30" viewBox="-15 -15 30 30" fill="none"><circle r="12.9" fill="#25324d" stroke="#548af7" stroke-width="2.2"/><path d="M4.6 -4.2 A6.2 6.2 0 1 0 4.6 4.2" stroke="#548af7" stroke-width="2.2" stroke-linecap="round" fill="none"/></svg>
<div class="a t " style="left:1069px;top:174.5px;line-height:48px;font-size:27px;color:#d5655c;letter-spacing:-0.194px;">Main.java</div>
<svg class="a" style="left:1205.5px;top:188px;" width="20" height="20" viewBox="-10 -10 20 20" fill="none"><path d="M-6.5 -6.5L6.5 6.5M6.5 -6.5L-6.5 6.5" stroke="#9da0a8" stroke-width="2" stroke-linecap="round"/></svg>
<div class="a" style="left:2566.6px;top:185.1px;width:4.8px;height:4.8px;background:#ced0d6;border-radius:3px;"></div>
<div class="a" style="left:2566.6px;top:195.6px;width:4.8px;height:4.8px;background:#ced0d6;border-radius:3px;"></div>
<div class="a" style="left:2566.6px;top:206.1px;width:4.8px;height:4.8px;background:#ced0d6;border-radius:3px;"></div>
<svg class="a" style="left:2466px;top:252.5px;" width="28" height="26" viewBox="-14 -13 28 26" fill="none"><path d="M-2 -9.8 a2.3 2.3 0 0 1 4 0 L11.6 7.2 a2.3 2.3 0 0 1 -2 3.4 H-9.6 a2.3 2.3 0 0 1 -2 -3.4 Z" fill="#c29e4a"/><path d="M0 -5V2.5" stroke="#1c1d1f" stroke-width="2.8" stroke-linecap="round"/><circle cy="6.6" r="1.8" fill="#1c1d1f"/></svg>
<div class="a t " style="left:2498.5px;top:246px;line-height:40px;font-size:24px;color:#9da0a8;">4</div>
<svg class="a" style="left:2532px;top:260px;" width="20" height="12" viewBox="-10 -6 20 12" fill="none"><path d="M-7 3.5L0 -3.5L7 3.5" stroke="#9da0a8" stroke-width="2.2" stroke-linecap="round" stroke-linejoin="round"/></svg>
<svg class="a" style="left:2574px;top:260px;" width="20" height="12" viewBox="-10 -6 20 12" fill="none"><path d="M-7 -3.5L0 3.5L7 -3.5" stroke="#9da0a8" stroke-width="2.2" stroke-linecap="round" stroke-linejoin="round"/></svg>
<div class="a" style="left:2586px;top:392px;width:16px;height:1252px;background:#38393b;border-radius:8px;"></div>
<div class="a" style="left:2580px;top:292px;width:28px;height:4px;background:#cba24f;"></div>
<div class="a" style="left:2580px;top:878px;width:28px;height:4px;background:#cba24f;"></div>
<div class="a" style="left:2586px;top:878px;width:16px;height:4px;background:#c8a765;"></div>
<div class="a" style="left:2580px;top:1050px;width:28px;height:4px;background:#cba24f;"></div>
<div class="a" style="left:2586px;top:1050px;width:16px;height:4px;background:#c8a765;"></div>
<div class="a" style="left:2580px;top:1466px;width:28px;height:4px;background:#cba24f;"></div>
<div class="a" style="left:2586px;top:1466px;width:16px;height:4px;background:#c8a765;"></div>
<div class="a" style="left:870px;top:1846px;width:1738px;height:28px;background:#373b3d;"></div>
<div class="a" style="left:876px;top:1852px;width:1409px;height:16px;background:#525355;border-radius:8px;box-shadow:0 0 0 1px #2f3133;"></div>
<div class="a" style="left:2610px;top:157px;width:485px;height:1717px;background:#27282b;"></div>
<div class="a" style="left:2610px;top:238px;width:485px;height:2px;background:#1c1d1f;"></div>
<div class="a t " style="left:2634.5px;top:174.5px;line-height:48px;font-size:26px;color:#dfe1e5;letter-spacing:0.482px;font-weight:bold;">Database</div>
<svg class="a" style="left:2633px;top:255px;" width="36" height="40" viewBox="-18 -20 36 40" fill="none"><path d="M-14.5 -4.5H10.5M-2 -17V8" stroke="#ced0d6" stroke-width="2.4" stroke-linecap="round"/><path d="M16.5 9.5V17H9Z" fill="#ced0d6"/></svg>
<svg class="a" style="left:2686.5px;top:256px;" width="30" height="32" viewBox="-15 -16 30 32" fill="none"><g stroke="#ced0d6" stroke-width="2.2" stroke-linecap="round" fill="none"><rect x="-11.5" y="-8.5" width="17.5" height="21.5" rx="4"/><path d="M-6.5 -12.5H4.5a5 5 0 0 1 5 5V8"/><path d="M-7 -2H1.5M-7 2.5H1.5M-7 7H1.5"/></g></svg>
<div class="a" style="left:2734.5px;top:252px;width:2px;height:40px;background:#43454a;"></div>
<svg class="a" style="left:2750px;top:256px;" width="36" height="32" viewBox="-18 -16 36 32" fill="none"><g stroke="#ced0d6" stroke-width="2.3" stroke-linecap="round" stroke-linejoin="round" fill="none"><path d="M-10.5 -3 A11 11 0 0 1 9.5 -6"/><path d="M10.5 3 A11 11 0 0 1 -9.5 6"/><path d="M-15.5 -4 L-10.5 -1.5 L-8 -7"/><path d="M15.5 4 L10.5 1.5 L8 7"/></g></svg>
<svg class="a" style="left:2802px;top:253px;" width="40" height="40" viewBox="-20 -20 40 40" fill="none"><g stroke="#ced0d6" stroke-width="2.2" stroke-linecap="round" fill="none"><ellipse cx="-3" cy="-9.5" rx="11" ry="4.5"/><path d="M-14 -9.5V7.5C-14 10 -10 11.8 -5 12"/><path d="M8 -9.5V-2"/><path d="M-14 -3.5C-14 -0.5 -8 1 -3 1"/><path d="M-14 2.5C-14 5.5 -9 6.8 -5 7"/></g><path d="M13.30 7.50L10.90 9.53L11.16 12.66L8.03 12.40L6.00 14.80L3.97 12.40L0.84 12.66L1.10 9.53L-1.30 7.50L1.10 5.47L0.84 2.34L3.97 2.60L6.00 0.20L8.03 2.60L11.16 2.34L10.90 5.47Z" fill="#27282b" stroke="#548af7" stroke-width="2" stroke-linejoin="round"/><circle cx="6" cy="7.5" r="2" fill="#548af7"/></svg>
<svg class="a" style="left:2853px;top:252px;" width="40" height="40" viewBox="-20 -20 40 40" fill="none"><path d="M-2.5 10.2H-7.6a4 4 0 0 1 -4 -4V-6.7a4 4 0 0 1 4 -4H6a4 4 0 0 1 4 4V2" stroke="#db5c5c" stroke-width="2.4" fill="none" stroke-linecap="round"/><g stroke="#ced0d6" stroke-width="2.2" stroke-linecap="round" fill="none"><path d="M-0.5 10.2H3.8"/><path d="M11.5 5.6H8.5a4.6 4.6 0 0 0 0 9.2H11.5Z"/><path d="M11.5 8H15M11.5 12.4H15"/></g></svg>
<div class="a" style="left:2904.5px;top:252px;width:2px;height:40px;background:#43454a;"></div>
<svg class="a" style="left:2922px;top:258px;" width="32" height="28" viewBox="-16 -14 32 28" fill="none"><g stroke="#535558" stroke-width="2.2" fill="none"><rect x="-12.5" y="-10.5" width="25" height="21" rx="3"/><path d="M-12.5 -3.5H12.5M-4.2 -10.5V10.5M4.2 -10.5V10.5"/></g></svg>
<div class="a t " style="left:2977px;top:253px;line-height:40px;font-size:23px;color:#535558;letter-spacing:-2.006px;">DDL</div>
<svg class="a" style="left:3055px;top:262px;" width="12" height="20" viewBox="-6 -10 12 20" fill="none"><path d="M-3.5 -7L3.5 0L-3.5 7" stroke="#b4b8bf" stroke-width="2.2" stroke-linecap="round" stroke-linejoin="round"/></svg>
<div class="a" style="left:2634px;top:314px;width:436px;height:48px;background:#3c3d41;border-radius:10px;"></div>
<svg class="a" style="left:2640px;top:332px;" width="20" height="12" viewBox="-10 -6 20 12" fill="none"><path d="M-7 -3.5L0 3.5L7 -3.5" stroke="#b4b8bf" stroke-width="2.2" stroke-linecap="round" stroke-linejoin="round"/></svg>
<svg class="a" style="left:2676px;top:322px;" width="32" height="32" viewBox="-16 -16 32 32" fill="none"><path d="M-13.5 -13 C-8 -12.5 -3 -10 0.5 -5 C3.5 -1 5 4 9 6.5 C11 7.5 12.5 8 13.5 9 L9.5 9.5 L13 13.5 C9 12 6.5 9.5 4.5 7.5 C1 6.5 -3 4 -5.5 1 C-5 4 -4 6.5 -2.5 8.5 C-5.5 7 -7 4 -7.5 1 C-8 3 -8.5 4.5 -9.5 5.5 C-10.5 1 -9.5 -4 -10.5 -8 C-11 -10 -12.5 -11.5 -13.5 -13Z" stroke="#1e9bd8" stroke-width="1.8" fill="none" stroke-linejoin="round"/></svg>
<div class="a t " style="left:2720px;top:315px;line-height:48px;font-size:27px;color:#dfe1e5;letter-spacing:0.003px;">@localhost</div>
<div class="a" style="left:2870px;top:317px;width:33px;height:41px;background:#3c3d41;border-radius:8px;border:2px solid #47494e;"></div>
<div class="a t " style="left:2875px;top:319px;line-height:40px;font-size:22px;color:#6f737a;letter-spacing:-1.469px;">10</div>
<svg class="a" style="left:2681px;top:375.5px;" width="12" height="20" viewBox="-6 -10 12 20" fill="none"><path d="M-3.5 -7L3.5 0L-3.5 7" stroke="#b4b8bf" stroke-width="2.2" stroke-linecap="round" stroke-linejoin="round"/></svg>
<svg class="a" style="left:2714px;top:371.5px;" width="32" height="30" viewBox="-16 -15 32 30" fill="none"><g stroke="#ced0d6" stroke-width="2.2" stroke-linejoin="round"><rect x="-12.8" y="-1" width="11.5" height="10.5" rx="1.5" fill="#3c3d42"/><rect x="4.5" y="-11.5" width="8.2" height="7.5" rx="1.5" fill="#3c3d42"/><rect x="4.5" y="2.2" width="8.2" height="7.5" rx="1.5" fill="#3c3d42"/><path d="M-7 -1V-7.5H4.5M-1.3 6H4.5" fill="none"/></g></svg>
<div class="a t " style="left:2758.7px;top:362.5px;line-height:48px;font-size:27px;color:#dfe1e5;letter-spacing:0.099px;">ebean_test</div>
<svg class="a" style="left:2681px;top:423.5px;" width="12" height="20" viewBox="-6 -10 12 20" fill="none"><path d="M-3.5 -7L3.5 0L-3.5 7" stroke="#b4b8bf" stroke-width="2.2" stroke-linecap="round" stroke-linejoin="round"/></svg>
<svg class="a" style="left:2714px;top:419.5px;" width="32" height="30" viewBox="-16 -15 32 30" fill="none"><g stroke="#ced0d6" stroke-width="2.2" stroke-linejoin="round"><rect x="-12.8" y="-1" width="11.5" height="10.5" rx="1.5" fill="#3c3d42"/><rect x="4.5" y="-11.5" width="8.2" height="7.5" rx="1.5" fill="#3c3d42"/><rect x="4.5" y="2.2" width="8.2" height="7.5" rx="1.5" fill="#3c3d42"/><path d="M-7 -1V-7.5H4.5M-1.3 6H4.5" fill="none"/></g></svg>
<div class="a t " style="left:2758.7px;top:410.5px;line-height:48px;font-size:27px;color:#dfe1e5;letter-spacing:0.170px;">information_schema</div>
<svg class="a" style="left:2681px;top:471.5px;" width="12" height="20" viewBox="-6 -10 12 20" fill="none"><path d="M-3.5 -7L3.5 0L-3.5 7" stroke="#b4b8bf" stroke-width="2.2" stroke-linecap="round" stroke-linejoin="round"/></svg>
<svg class="a" style="left:2714px;top:467.5px;" width="32" height="30" viewBox="-16 -15 32 30" fill="none"><g stroke="#ced0d6" stroke-width="2.2" stroke-linejoin="round"><rect x="-12.8" y="-1" width="11.5" height="10.5" rx="1.5" fill="#3c3d42"/><rect x="4.5" y="-11.5" width="8.2" height="7.5" rx="1.5" fill="#3c3d42"/><rect x="4.5" y="2.2" width="8.2" height="7.5" rx="1.5" fill="#3c3d42"/><path d="M-7 -1V-7.5H4.5M-1.3 6H4.5" fill="none"/></g></svg>
<div class="a t " style="left:2758.7px;top:458.5px;line-height:48px;font-size:27px;color:#dfe1e5;letter-spacing:0.123px;">mysql</div>
<svg class="a" style="left:2681px;top:519.5px;" width="12" height="20" viewBox="-6 -10 12 20" fill="none"><path d="M-3.5 -7L3.5 0L-3.5 7" stroke="#b4b8bf" stroke-width="2.2" stroke-linecap="round" stroke-linejoin="round"/></svg>
<svg class="a" style="left:2714px;top:515.5px;" width="32" height="30" viewBox="-16 -15 32 30" fill="none"><g stroke="#ced0d6" stroke-width="2.2" stroke-linejoin="round"><rect x="-12.8" y="-1" width="11.5" height="10.5" rx="1.5" fill="#3c3d42"/><rect x="4.5" y="-11.5" width="8.2" height="7.5" rx="1.5" fill="#3c3d42"/><rect x="4.5" y="2.2" width="8.2" height="7.5" rx="1.5" fill="#3c3d42"/><path d="M-7 -1V-7.5H4.5M-1.3 6H4.5" fill="none"/></g></svg>
<div class="a t " style="left:2758.7px;top:506.5px;line-height:48px;font-size:27px;color:#dfe1e5;letter-spacing:0.192px;">onlineOrder</div>
<svg class="a" style="left:2681px;top:567.5px;" width="12" height="20" viewBox="-6 -10 12 20" fill="none"><path d="M-3.5 -7L3.5 0L-3.5 7" stroke="#b4b8bf" stroke-width="2.2" stroke-linecap="round" stroke-linejoin="round"/></svg>
<svg class="a" style="left:2714px;top:563.5px;" width="32" height="30" viewBox="-16 -15 32 30" fill="none"><g stroke="#ced0d6" stroke-width="2.2" stroke-linejoin="round"><rect x="-12.8" y="-1" width="11.5" height="10.5" rx="1.5" fill="#3c3d42"/><rect x="4.5" y="-11.5" width="8.2" height="7.5" rx="1.5" fill="#3c3d42"/><rect x="4.5" y="2.2" width="8.2" height="7.5" rx="1.5" fill="#3c3d42"/><path d="M-7 -1V-7.5H4.5M-1.3 6H4.5" fill="none"/></g></svg>
<div class="a t " style="left:2758.7px;top:554.5px;line-height:48px;font-size:27px;color:#dfe1e5;letter-spacing:0.110px;">performance_schema</div>
<svg class="a" style="left:2681px;top:615.5px;" width="12" height="20" viewBox="-6 -10 12 20" fill="none"><path d="M-3.5 -7L3.5 0L-3.5 7" stroke="#b4b8bf" stroke-width="2.2" stroke-linecap="round" stroke-linejoin="round"/></svg>
<svg class="a" style="left:2714px;top:611.5px;" width="32" height="30" viewBox="-16 -15 32 30" fill="none"><g stroke="#ced0d6" stroke-width="2.2" stroke-linejoin="round"><rect x="-12.8" y="-1" width="11.5" height="10.5" rx="1.5" fill="#3c3d42"/><rect x="4.5" y="-11.5" width="8.2" height="7.5" rx="1.5" fill="#3c3d42"/><rect x="4.5" y="2.2" width="8.2" height="7.5" rx="1.5" fill="#3c3d42"/><path d="M-7 -1V-7.5H4.5M-1.3 6H4.5" fill="none"/></g></svg>
<div class="a t " style="left:2758.7px;top:602.5px;line-height:48px;font-size:27px;color:#dfe1e5;letter-spacing:0.541px;">staybooking</div>
<svg class="a" style="left:2681px;top:663.5px;" width="12" height="20" viewBox="-6 -10 12 20" fill="none"><path d="M-3.5 -7L3.5 0L-3.5 7" stroke="#b4b8bf" stroke-width="2.2" stroke-linecap="round" stroke-linejoin="round"/></svg>
<svg class="a" style="left:2714px;top:659.5px;" width="32" height="30" viewBox="-16 -15 32 30" fill="none"><g stroke="#ced0d6" stroke-width="2.2" stroke-linejoin="round"><rect x="-12.8" y="-1" width="11.5" height="10.5" rx="1.5" fill="#3c3d42"/><rect x="4.5" y="-11.5" width="8.2" height="7.5" rx="1.5" fill="#3c3d42"/><rect x="4.5" y="2.2" width="8.2" height="7.5" rx="1.5" fill="#3c3d42"/><path d="M-7 -1V-7.5H4.5M-1.3 6H4.5" fill="none"/></g></svg>
<div class="a t " style="left:2758.7px;top:650.5px;line-height:48px;font-size:27px;color:#dfe1e5;letter-spacing:0.617px;">study</div>
<svg class="a" style="left:2681px;top:711.5px;" width="12" height="20" viewBox="-6 -10 12 20" fill="none"><path d="M-3.5 -7L3.5 0L-3.5 7" stroke="#b4b8bf" stroke-width="2.2" stroke-linecap="round" stroke-linejoin="round"/></svg>
<svg class="a" style="left:2714px;top:707.5px;" width="32" height="30" viewBox="-16 -15 32 30" fill="none"><g stroke="#ced0d6" stroke-width="2.2" stroke-linejoin="round"><rect x="-12.8" y="-1" width="11.5" height="10.5" rx="1.5" fill="#3c3d42"/><rect x="4.5" y="-11.5" width="8.2" height="7.5" rx="1.5" fill="#3c3d42"/><rect x="4.5" y="2.2" width="8.2" height="7.5" rx="1.5" fill="#3c3d42"/><path d="M-7 -1V-7.5H4.5M-1.3 6H4.5" fill="none"/></g></svg>
<div class="a t " style="left:2758.7px;top:698.5px;line-height:48px;font-size:27px;color:#dfe1e5;letter-spacing:0.691px;">study2</div>
<svg class="a" style="left:2681px;top:759.5px;" width="12" height="20" viewBox="-6 -10 12 20" fill="none"><path d="M-3.5 -7L3.5 0L-3.5 7" stroke="#b4b8bf" stroke-width="2.2" stroke-linecap="round" stroke-linejoin="round"/></svg>
<svg class="a" style="left:2714px;top:755.5px;" width="32" height="30" viewBox="-16 -15 32 30" fill="none"><g stroke="#ced0d6" stroke-width="2.2" stroke-linejoin="round"><rect x="-12.8" y="-1" width="11.5" height="10.5" rx="1.5" fill="#3c3d42"/><rect x="4.5" y="-11.5" width="8.2" height="7.5" rx="1.5" fill="#3c3d42"/><rect x="4.5" y="2.2" width="8.2" height="7.5" rx="1.5" fill="#3c3d42"/><path d="M-7 -1V-7.5H4.5M-1.3 6H4.5" fill="none"/></g></svg>
<div class="a t " style="left:2758.7px;top:746.5px;line-height:48px;font-size:27px;color:#dfe1e5;letter-spacing:0.791px;">study4</div>
<svg class="a" style="left:2681px;top:807.5px;" width="12" height="20" viewBox="-6 -10 12 20" fill="none"><path d="M-3.5 -7L3.5 0L-3.5 7" stroke="#b4b8bf" stroke-width="2.2" stroke-linecap="round" stroke-linejoin="round"/></svg>
<svg class="a" style="left:2714px;top:803.5px;" width="32" height="30" viewBox="-16 -15 32 30" fill="none"><g stroke="#ced0d6" stroke-width="2.2" stroke-linejoin="round"><rect x="-12.8" y="-1" width="11.5" height="10.5" rx="1.5" fill="#3c3d42"/><rect x="4.5" y="-11.5" width="8.2" height="7.5" rx="1.5" fill="#3c3d42"/><rect x="4.5" y="2.2" width="8.2" height="7.5" rx="1.5" fill="#3c3d42"/><path d="M-7 -1V-7.5H4.5M-1.3 6H4.5" fill="none"/></g></svg>
<div class="a t " style="left:2758.7px;top:794.5px;line-height:48px;font-size:27px;color:#dfe1e5;letter-spacing:-0.250px;">sys</div>
<svg class="a" style="left:2681px;top:855.5px;" width="12" height="20" viewBox="-6 -10 12 20" fill="none"><path d="M-3.5 -7L3.5 0L-3.5 7" stroke="#b4b8bf" stroke-width="2.2" stroke-linecap="round" stroke-linejoin="round"/></svg>
<svg class="a" style="left:2713px;top:848.5px;" width="36" height="36" viewBox="-18 -18 36 36" fill="none"><path d="M-13.8 -9.8a2 2 0 0 1 2 -2h5.6a2 2 0 0 1 1.5 .6l3.3 3.3h9.8a2 2 0 0 1 2 2V9.5H-11.8a2 2 0 0 1 -2 -2Z" fill="#3c3d42"/><path d="M-13.8 -9.8a2 2 0 0 1 2 -2h5.6a2 2 0 0 1 1.5 .6l3.3 3.3h9.8a2 2 0 0 1 2 2V-1.5M-3.5 9.5h-8.3a2 2 0 0 1 -2 -2V-9.8" fill="none" stroke="#ced0d6" stroke-width="2.2" stroke-linejoin="round" stroke-linecap="round"/><rect x="-2.6" y="-0.2" width="19.4" height="17.5" fill="#27282b"/><g fill="#1e2638" stroke="#548af7" stroke-width="1.8"><rect x="0" y="2.4" width="14.2" height="4.6"/><rect x="0" y="9.9" width="14.2" height="4.6"/></g><path d="M2.8 4.7H4.6M2.8 12.2H4.6" stroke="#548af7" stroke-width="1.8"/></svg>
<div class="a t " style="left:2758.7px;top:842.5px;line-height:48px;font-size:27px;color:#dfe1e5;letter-spacing:0.227px;">Server Objects</div>
<div class="a" style="left:3094px;top:157px;width:2px;height:2400px;background:#1c1d1f;"></div>
<div class="a" style="left:3096px;top:157px;width:80px;height:2400px;background:#27282b;"></div>
<svg class="a" style="left:3112px;top:174.6px;" width="48" height="48" viewBox="-24 -24 48 48" fill="none"><g stroke="#ced0d6" stroke-width="2.8" stroke-linejoin="round" fill="none"><path d="M-10.3 -7.1A10.3 10.3 0 0 1 10.3 -7.1V-1.5L15.3 7.7a1.4 1.4 0 0 1 -1.2 2H-14.1a1.4 1.4 0 0 1 -1.2 -2L-10.3 -1.5Z"/></g><path d="M-4.4 13.3H4.4A4.4 4.4 0 0 1 -4.4 13.3Z" fill="#ced0d6"/><circle cx="13.1" cy="-13.6" r="9.8" fill="#27282b"/><circle cx="13.1" cy="-13.6" r="7.1" fill="#3f80ea"/></svg>
<div class="a" style="left:3106px;top:248px;width:60px;height:60px;background:#43454a;border-radius:12.5px;"></div>
<svg class="a" style="left:3114px;top:256px;" width="44" height="44" viewBox="-22 -22 44 44" fill="none"><g stroke="#ced0d6" stroke-width="2.6" fill="none"><ellipse cx="0" cy="-11" rx="14.6" ry="5.7"/><path d="M-14.6 -11V11a14.6 5.7 0 0 0 29.2 0V-11"/><path d="M-14.6 -3.7a14.6 5.7 0 0 0 29.2 0M-14.6 3.6a14.6 5.7 0 0 0 29.2 0"/></g></svg>
<svg class="a" style="left:3114px;top:338px;" width="44" height="40" viewBox="-22 -20 44 40" fill="none"><rect x="-15.5" y="-17" width="16" height="17" rx="7" fill="#ced0d6"/><rect x="-0.5" y="-17" width="16" height="17" rx="7" fill="#ced0d6"/><ellipse cx="0" cy="6.5" rx="19.6" ry="10.3" fill="#ced0d6"/><rect x="-11.6" y="-13" width="8.3" height="8.8" rx="3.6" fill="#27282b"/><rect x="3.3" y="-13" width="8.3" height="8.8" rx="3.6" fill="#27282b"/><path d="M-11.9 0H11.8V7C8 9 4 9.8 0 9.8C-4 9.8 -8 9 -11.9 7Z" fill="#27282b"/><rect x="-6.1" y="2.2" width="3.4" height="7.6" rx="1.7" fill="#ced0d6"/><rect x="2.5" y="2.2" width="3.4" height="7.6" rx="1.7" fill="#ced0d6"/></svg>
<svg class="a" style="left:3114px;top:416px;" width="44" height="44" viewBox="-22 -22 44 44" fill="none"><defs><linearGradient id="cb" x1="0" y1="0" x2="0" y2="1"><stop offset="0" stop-color="#00a6ff"/><stop offset="1" stop-color="#0a5cff"/></linearGradient></defs><circle cx="0" cy="-0.3" r="16.6" fill="url(#cb)"/><path d="M-13.5 8L-15.3 15L-6 14Z" fill="#0a60ff"/><circle cx="0" cy="0.2" r="2.2" fill="#1c1d1f"/><circle cx="7.9" cy="0.2" r="2.2" fill="#1c1d1f"/></svg>
<svg class="a" style="left:3114px;top:496.4px;" width="44" height="44" viewBox="-22 -22 44 44" fill="none"><g transform="translate(-19.2 -19.2) scale(1.6)"><path d="M22.2819 9.8211a5.9847 5.9847 0 0 0-.5157-4.9108 6.0462 6.0462 0 0 0-6.5098-2.9A6.0651 6.0651 0 0 0 4.9807 4.1818a5.9847 5.9847 0 0 0-3.9977 2.9 6.0462 6.0462 0 0 0 .7427 7.0966 5.98 5.98 0 0 0 .511 4.9107 6.051 6.051 0 0 0 6.5146 2.9001A5.9847 5.9847 0 0 0 13.2599 24a6.0557 6.0557 0 0 0 5.7718-4.2058 5.9894 5.9894 0 0 0 3.9977-2.9001 6.0557 6.0557 0 0 0-.7475-7.0729z" fill="#fff" stroke="#fff" stroke-width="1.3" stroke-linejoin="round"/><path d="M22.2819 9.8211a5.9847 5.9847 0 0 0-.5157-4.9108 6.0462 6.0462 0 0 0-6.5098-2.9A6.0651 6.0651 0 0 0 4.9807 4.1818a5.9847 5.9847 0 0 0-3.9977 2.9 6.0462 6.0462 0 0 0 .7427 7.0966 5.98 5.98 0 0 0 .511 4.9107 6.051 6.051 0 0 0 6.5146 2.9001A5.9847 5.9847 0 0 0 13.2599 24a6.0557 6.0557 0 0 0 5.7718-4.2058 5.9894 5.9894 0 0 0 3.9977-2.9001 6.0557 6.0557 0 0 0-.7475-7.0729zm-9.022 12.6081a4.4755 4.4755 0 0 1-2.8764-1.0408l.1419-.0804 4.7783-2.7582a.7948.7948 0 0 0 .3927-.6813v-6.7369l2.02 1.1686a.071.071 0 0 1 .038.052v5.5826a4.504 4.504 0 0 1-4.4945 4.4944zm-9.6607-4.1254a4.4708 4.4708 0 0 1-.5346-3.0137l.142.0852 4.783 2.7582a.7712.7712 0 0 0 .7806 0l5.8428-3.3685v2.3324a.0804.0804 0 0 1-.0332.0615L9.74 19.9502a4.4992 4.4992 0 0 1-6.1408-1.6464zM2.3408 7.8956a4.485 4.485 0 0 1 2.3655-1.9728V11.6a.7664.7664 0 0 0 .3879.6765l5.8144 3.3543-2.0201 1.1685a.0757.0757 0 0 1-.071 0l-4.8303-2.7865A4.504 4.504 0 0 1 2.3408 7.872zm16.5963 3.8558L13.1038 8.364 15.1192 7.2a.0757.0757 0 0 1 .071 0l4.8303 2.7913a4.4944 4.4944 0 0 1-.6765 8.1042v-5.6772a.79.79 0 0 0-.407-.667zm2.0107-3.0231l-.142-.0852-4.7735-2.7818a.7759.7759 0 0 0-.7854 0L9.409 9.2297V6.8974a.0662.0662 0 0 1 .0284-.0615l4.8303-2.7866a4.4992 4.4992 0 0 1 6.6802 4.66zM8.3065 12.863l-2.02-1.1638a.0804.0804 0 0 1-.038-.0567V6.0742a4.4992 4.4992 0 0 1 7.3757-3.4537l-.142.0805L8.704 5.459a.7948.7948 0 0 0-.3927.6813zm1.0976-2.3654l2.602-1.4998 2.6069 1.4998v2.9994l-2.5974 1.4997-2.6067-1.4997Z" fill="#1c1d1f"/><path d="M22.2819 9.8211a5.9847 5.9847 0 0 0-.5157-4.9108 6.0462 6.0462 0 0 0-6.5098-2.9A6.0651 6.0651 0 0 0 4.9807 4.1818a5.9847 5.9847 0 0 0-3.9977 2.9 6.0462 6.0462 0 0 0 .7427 7.0966 5.98 5.98 0 0 0 .511 4.9107 6.051 6.051 0 0 0 6.5146 2.9001A5.9847 5.9847 0 0 0 13.2599 24a6.0557 6.0557 0 0 0 5.7718-4.2058 5.9894 5.9894 0 0 0 3.9977-2.9001 6.0557 6.0557 0 0 0-.7475-7.0729zm-9.022 12.6081a4.4755 4.4755 0 0 1-2.8764-1.0408l.1419-.0804 4.7783-2.7582a.7948.7948 0 0 0 .3927-.6813v-6.7369l2.02 1.1686a.071.071 0 0 1 .038.052v5.5826a4.504 4.504 0 0 1-4.4945 4.4944zm-9.6607-4.1254a4.4708 4.4708 0 0 1-.5346-3.0137l.142.0852 4.783 2.7582a.7712.7712 0 0 0 .7806 0l5.8428-3.3685v2.3324a.0804.0804 0 0 1-.0332.0615L9.74 19.9502a4.4992 4.4992 0 0 1-6.1408-1.6464zM2.3408 7.8956a4.485 4.485 0 0 1 2.3655-1.9728V11.6a.7664.7664 0 0 0 .3879.6765l5.8144 3.3543-2.0201 1.1685a.0757.0757 0 0 1-.071 0l-4.8303-2.7865A4.504 4.504 0 0 1 2.3408 7.872zm16.5963 3.8558L13.1038 8.364 15.1192 7.2a.0757.0757 0 0 1 .071 0l4.8303 2.7913a4.4944 4.4944 0 0 1-.6765 8.1042v-5.6772a.79.79 0 0 0-.407-.667zm2.0107-3.0231l-.142-.0852-4.7735-2.7818a.7759.7759 0 0 0-.7854 0L9.409 9.2297V6.8974a.0662.0662 0 0 1 .0284-.0615l4.8303-2.7866a4.4992 4.4992 0 0 1 6.6802 4.66zM8.3065 12.863l-2.02-1.1638a.0804.0804 0 0 1-.038-.0567V6.0742a4.4992 4.4992 0 0 1 7.3757-3.4537l-.142.0805L8.704 5.459a.7948.7948 0 0 0-.3927.6813zm1.0976-2.3654l2.602-1.4998 2.6069 1.4998v2.9994l-2.5974 1.4997-2.6067-1.4997Z" fill="none" stroke="#fff" stroke-width=".42"/></g></svg>
<svg class="a" style="left:3114px;top:577px;" width="44" height="44" viewBox="-22 -22 44 44" fill="none"><rect x="-15.5" y="-17.6" width="16" height="17" rx="7" fill="#ced0d6"/><rect x="-0.5" y="-17.6" width="16" height="17" rx="7" fill="#ced0d6"/><rect x="-11.6" y="-13.6" width="8.3" height="8.8" rx="3.6" fill="#27282b"/><rect x="3.3" y="-13.6" width="8.3" height="8.8" rx="3.6" fill="#27282b"/><path d="M-15 -4C-18.5 -1.5 -19.6 2 -19.4 5C-19 8 -17 10 -14 11.5C-9.5 13.7 -4.5 14.8 1 15L-1 11.5C-5 11 -9 10 -11.9 8.5V-1H-2V-4Z" fill="#ced0d6"/><rect x="-6.1" y="1.4" width="3.4" height="6.6" rx="1.7" fill="#ced0d6"/><path d="M4.5 -4.6H15a6 6 0 0 1 6 6V8.7a6 6 0 0 1 -6 6H15L14.4 19.5L8.5 14.7H4.5a6 6 0 0 1 -6 -6V1.4a6 6 0 0 1 6 -6Z" fill="#27282b"/><path d="M4.5 -3.1H15a4.5 4.5 0 0 1 4.5 4.5V8.7a4.5 4.5 0 0 1 -4.5 4.5H13.6L13.3 16.6L9 13.2H4.5a4.5 4.5 0 0 1 -4.5 -4.5V1.4a4.5 4.5 0 0 1 4.5 -4.5Z" fill="#ced0d6"/></svg>
<div class="a" style="left:194px;top:1874px;width:2901px;height:2px;background:#1c1d1f;"></div>
<div class="a" style="left:194px;top:1876px;width:2901px;height:681px;background:#27282b;"></div>
<div class="a t " style="left:218px;top:1893px;line-height:48px;font-size:25px;color:#dfe1e5;letter-spacing:-0.547px;font-weight:bold;">Run</div>
<svg class="a" style="left:323px;top:1903px;" width="30" height="26" viewBox="-15 -13 30 26" fill="none"><rect x="-13.8" y="-11.8" width="27.6" height="23.6" rx="4" fill="#1e2638" stroke="#3a5ea6" stroke-width="2"/><path d="M-9 -6H-6M-3.5 -6H-0.5" stroke="#3a5ea6" stroke-width="1.8"/></svg>
<div class="a t " style="left:363px;top:1893px;line-height:48px;font-size:27px;color:#dfe1e5;letter-spacing:-0.508px;">Main</div>
<svg class="a" style="left:443.5px;top:1908px;" width="20" height="20" viewBox="-10 -10 20 20" fill="none"><path d="M-6.5 -6.5L6.5 6.5M6.5 -6.5L-6.5 6.5" stroke="#9da0a8" stroke-width="2" stroke-linecap="round"/></svg>
<div class="a" style="left:194px;top:1957px;width:2901px;height:2px;background:#1c1d1f;"></div>
<div class="a" style="left:298px;top:1952px;width:186px;height:6px;background:#3574f0;border-radius:3px;"></div>
<div class="a" style="left:2997.6px;top:1903.1px;width:4.8px;height:4.8px;background:#ced0d6;border-radius:3px;"></div>
<div class="a" style="left:2997.6px;top:1913.6px;width:4.8px;height:4.8px;background:#ced0d6;border-radius:3px;"></div>
<div class="a" style="left:2997.6px;top:1924.1px;width:4.8px;height:4.8px;background:#ced0d6;border-radius:3px;"></div>
<div class="a" style="left:3039px;top:1915px;width:26px;height:2.4px;background:#ced0d6;border-radius:1px;"></div>
<svg class="a" style="left:201px;top:1974px;" width="36" height="36" viewBox="-18 -18 36 36" fill="none"><g stroke="#ced0d6" stroke-width="2.3" stroke-linecap="round" stroke-linejoin="round" fill="none"><path d="M-1 12 A11.5 11.5 0 1 1 9.5 -6.5"/><path d="M10.5 -14.5V-6H2"/></g><path d="M2.5 2.5L14.5 9.5L2.5 16.5Z" fill="#27282b" stroke="#57965c" stroke-width="2.2" stroke-linejoin="round"/></svg>
<div class="a" style="left:259.5px;top:1980px;width:24px;height:24px;background:#535558;border-radius:3px;"></div>
<div class="a" style="left:304.5px;top:1972px;width:2px;height:40px;background:#43454a;"></div>
<svg class="a" style="left:321px;top:1977px;" width="34" height="30" viewBox="-17 -15 34 30" fill="none"><g stroke="#535558" stroke-width="2.2" stroke-linejoin="round" fill="none"><path d="M-13.5 -6.5 a3 3 0 0 1 3 -3 h3 l2.5 -3.5 h10 l2.5 3.5 h3 a3 3 0 0 1 3 3 v14 a3 3 0 0 1 -3 3 h-21 a3 3 0 0 1 -3 -3z"/><circle cy="1.5" r="5.2"/></g></svg>
<svg class="a" style="left:375.5px;top:1976px;" width="32" height="32" viewBox="-16 -16 32 32" fill="none"><g stroke="#535558" stroke-width="2.2" stroke-linecap="round" stroke-linejoin="round" fill="none"><path d="M-4.5 -8V-10.5 a2.5 2.5 0 0 1 2.5 -2.5 h10.5 a2.5 2.5 0 0 1 2.5 2.5 v21 a2.5 2.5 0 0 1 -2.5 2.5 h-10.5 a2.5 2.5 0 0 1 -2.5 -2.5V8"/><path d="M-13 0H3.5M-2 -5.5L3.5 0L-2 5.5"/></g></svg>
<svg class="a" style="left:424px;top:1977px;" width="36" height="32" viewBox="-18 -16 36 32" fill="none"><g stroke="#535558" stroke-width="2.2" stroke-linecap="round" stroke-linejoin="round" fill="none"><path d="M-10 11 A14 14 0 1 1 10 11 Z"/><path d="M1.5 2L8 -5.5"/><circle cy="3.5" r="2.6"/></g><path d="M17 9V16H10Z" fill="#535558"/></svg>
<div class="a" style="left:491.1px;top:1979.1px;width:4.8px;height:4.8px;background:#ced0d6;border-radius:3px;"></div>
<div class="a" style="left:491.1px;top:1989.6px;width:4.8px;height:4.8px;background:#ced0d6;border-radius:3px;"></div>
<div class="a" style="left:491.1px;top:2000.1px;width:4.8px;height:4.8px;background:#ced0d6;border-radius:3px;"></div>
<div class="a" style="left:194px;top:2025px;width:64px;height:2px;background:#1c1d1f;"></div>
<div class="a" style="left:258px;top:2026px;width:2837px;height:531px;background:#1c1d1f;"></div>
<svg class="a" style="left:212px;top:2052px;" width="28" height="32" viewBox="-14 -16 28 32" fill="none"><g stroke="#ced0d6" stroke-width="2.2" stroke-linecap="round" stroke-linejoin="round"><path d="M0 11V-10.5M-8 -3L0 -11L8 -3"/></g></svg>
<svg class="a" style="left:212px;top:2104px;" width="28" height="32" viewBox="-14 -16 28 32" fill="none"><g stroke="#ced0d6" stroke-width="2.2" stroke-linecap="round" stroke-linejoin="round"><path d="M0 -11V10.5M-8 3L0 11L8 3"/></g></svg>
<svg class="a" style="left:209px;top:2158px;" width="34" height="30" viewBox="-17 -15 34 30" fill="none"><g stroke="#ced0d6" stroke-width="2.2" stroke-linecap="round" stroke-linejoin="round" fill="none"><path d="M-13 -11H13M-13 -1.5H8.5 a4.7 4.7 0 0 1 0 9.5H3M-13 8H-5M7 4L3 8L7 12"/></g></svg>
<div class="a" style="left:204px;top:2202px;width:44px;height:44px;background:#43454a;border-radius:8px;"></div>
<svg class="a" style="left:209px;top:2208px;" width="34" height="32" viewBox="-17 -16 34 32" fill="none"><g stroke="#ced0d6" stroke-width="2.2" stroke-linecap="round" stroke-linejoin="round" fill="none"><path d="M-13 -9H-3M-13 0H-3M-13 10H13M6.5 -11V3M0.5 -2.5L6.5 3.5L12.5 -2.5"/></g></svg>
<svg class="a" style="left:209px;top:2260px;" width="34" height="32" viewBox="-17 -16 34 32" fill="none"><g stroke="#ced0d6" stroke-width="2.2" stroke-linejoin="round" fill="none"><path d="M-8.5 -4V-11.5H8.5V-4"/><rect x="-13.5" y="-4" width="27" height="13.5" rx="3"/><rect x="-7.5" y="3.5" width="15" height="8.5" fill="#27282b"/></g><circle cx="8.5" cy="0.5" r="1.5" fill="#ced0d6"/></svg>
<svg class="a" style="left:211px;top:2311px;" width="30" height="34" viewBox="-15 -17 30 34" fill="none"><g stroke="#ced0d6" stroke-width="2.2" stroke-linecap="round" stroke-linejoin="round" fill="none"><path d="M-12 -7.5H12M-5.5 -8 a5.5 5.5 0 0 1 11 0"/><path d="M-9.5 -7.5V10.5 a3 3 0 0 0 3 3 h13 a3 3 0 0 0 3 -3V-7.5"/><path d="M-3 -1.5V7.5M3 -1.5V7.5"/></g></svg>
<div class="a" style="left:258px;top:2026px;width:2808px;height:502px;overflow:hidden;">
<div class="a con" style="left:24.4px;top:3.5px">/Users/eve/Library/Java/JavaVirtualMachines/openjdk-21.0.1-1/Contents/Home/bin/java -javaagent:/Applications/IntelliJ IDEA.app/Contents/lib/idea_rt.jar=51091:/Applications/IntelliJ IDEA.app/Contents/bin</div>
<div class="a con" style="left:24.4px;top:47.5px">My name is JoeNo, student id is 13, sex is male</div>
<div class="a con" style="left:24.4px;top:91.5px">My name is SSam, student id is 111, sex is female</div>
<div class="a con" style="left:24.4px;top:135.5px">My name is Joe, student id is 133, sex is female</div>
<div class="a con" style="left:24.4px;top:179.5px">My name is Sam, student id is 12312, sex is male</div>
<div class="a con" style="left:24.4px;top:223.5px">My name is Angela, student id is 3423423, sex is male</div>
<div class="a con" style="left:24.4px;top:267.5px">My name is An, student id is 34234233, sex is female</div>
<div class="a con" style="left:24.4px;top:311.5px">My name is Jo, student id is 199012312, sex is male</div>
<div class="a con" style="left:24.4px;top:355.5px">My name is EveYes, student id is 199013123, sex is male</div>
<div class="a con" style="left:24.4px;top:399.5px"></div>
<div class="a con" style="left:24.4px;top:443.5px">Process finished with exit code 0</div>
</div>
<div class="a" style="left:3066px;top:2026px;width:28px;height:502px;background:#373b3d;"></div>
<div class="a" style="left:3066px;top:2528px;width:29px;height:28px;background:#27282b;"></div>
<div class="a" style="left:3071.5px;top:2033px;width:17px;height:463.5px;background:#525355;border-radius:8.5px;box-shadow:0 0 0 1px #2f3133;"></div>
<div class="a" style="left:282px;top:2528px;width:2784px;height:28px;background:#373b3d;"></div>
<div class="a" style="left:288px;top:2534px;width:1113px;height:16px;background:#525355;border-radius:8px;box-shadow:0 0 0 1px #2f3133;"></div>
<div class="a" style="left:112px;top:2556px;width:3064px;height:1px;background:#1c1d1f;"></div>
<div class="a" style="left:112px;top:2557px;width:3064px;height:59px;background:#27282b;"></div>
<div class="a" style="left:140px;top:2577px;width:15px;height:15px;background:transparent;border-radius:3.5px;border:2.4px solid #548af7;"></div>
<div class="a t " style="left:164.5px;top:2565px;line-height:40px;font-size:27px;color:#9da0a8;letter-spacing:-1.336px;">JDBC</div>
<svg class="a" style="left:251px;top:2575px;" width="12" height="20" viewBox="-6 -10 12 20" fill="none"><path d="M-3.5 -7L3.5 0L-3.5 7" stroke="#9da0a8" stroke-width="2.2" stroke-linecap="round" stroke-linejoin="round"/></svg>
<div class="a t " style="left:282.5px;top:2565px;line-height:40px;font-size:27px;color:#9da0a8;letter-spacing:0.004px;">src</div>
<svg class="a" style="left:338px;top:2575px;" width="12" height="20" viewBox="-6 -10 12 20" fill="none"><path d="M-3.5 -7L3.5 0L-3.5 7" stroke="#9da0a8" stroke-width="2.2" stroke-linecap="round" stroke-linejoin="round"/></svg>
<svg class="a" style="left:369px;top:2570px;" width="30" height="30" viewBox="-15 -15 30 30" fill="none"><circle r="12.9" fill="#25324d" stroke="#548af7" stroke-width="2.2"/><path d="M4.6 -4.2 A6.2 6.2 0 1 0 4.6 4.2" stroke="#548af7" stroke-width="2.2" stroke-linecap="round" fill="none"/></svg>
<div class="a t " style="left:408px;top:2565px;line-height:40px;font-size:27px;color:#9da0a8;letter-spacing:-0.174px;">Main</div>
<svg class="a" style="left:2580px;top:2572px;" width="28" height="28" viewBox="-14 -14 28 28" fill="none"><defs><linearGradient id="vg" x1="0.2" y1="0" x2="0.45" y2="1"><stop offset="0" stop-color="#35d85c"/><stop offset=".45" stop-color="#1fc08a"/><stop offset="1" stop-color="#1a72f2"/></linearGradient></defs><path d="M-13 -13 H-5.5 L-3.5 3 L6 -13 H13 L-2.5 13 H-12.5Z" fill="url(#vg)"/></svg>
<svg class="a" style="left:2641px;top:2571px;" width="34" height="30" viewBox="-17 -15 34 30" fill="none"><g transform="scale(.74)"><rect x="-15.5" y="-17" width="16" height="17" rx="7" fill="#ced0d6"/><rect x="-0.5" y="-17" width="16" height="17" rx="7" fill="#ced0d6"/><ellipse cx="0" cy="6.5" rx="19.6" ry="10.3" fill="#ced0d6"/><rect x="-11.6" y="-13" width="8.3" height="8.8" rx="3.6" fill="#27282b"/><rect x="3.3" y="-13" width="8.3" height="8.8" rx="3.6" fill="#27282b"/><path d="M-11.9 0H11.8V7C8 9 4 9.8 0 9.8C-4 9.8 -8 9 -11.9 7Z" fill="#27282b"/><rect x="-6.1" y="2.2" width="3.6" height="7.6" rx="1.7" fill="#ced0d6"/><rect x="2.5" y="2.2" width="3.6" height="7.6" rx="1.7" fill="#ced0d6"/></g></svg>
<div class="a t " style="left:2706.7px;top:2565px;line-height:40px;font-size:27px;color:#9da0a8;letter-spacing:-0.516px;">39:1</div>
<div class="a t " style="left:2790.7px;top:2565px;line-height:40px;font-size:27px;color:#9da0a8;letter-spacing:-3.008px;">LF</div>
<div class="a t " style="left:2852.7px;top:2565px;line-height:40px;font-size:27px;color:#9da0a8;letter-spacing:0.202px;">UTF-8</div>
<div class="a t " style="left:2964.3px;top:2565px;line-height:40px;font-size:27px;color:#9da0a8;letter-spacing:0.277px;">4 spaces</div>
<svg class="a" style="left:3112px;top:2569px;" width="30" height="32" viewBox="-15 -16 30 32" fill="none"><g stroke="#ced0d6" stroke-width="2.3" stroke-linecap="round" fill="none"><rect x="-12.5" y="-2.5" width="18" height="14.5" rx="3"/><path d="M1 -2.5V-7 a5.5 5.5 0 0 1 11 0V-4.5"/><path d="M-3.5 3.5V7"/></g></svg>
<div class="a" id="ring"></div>
</div>
</body></html>
